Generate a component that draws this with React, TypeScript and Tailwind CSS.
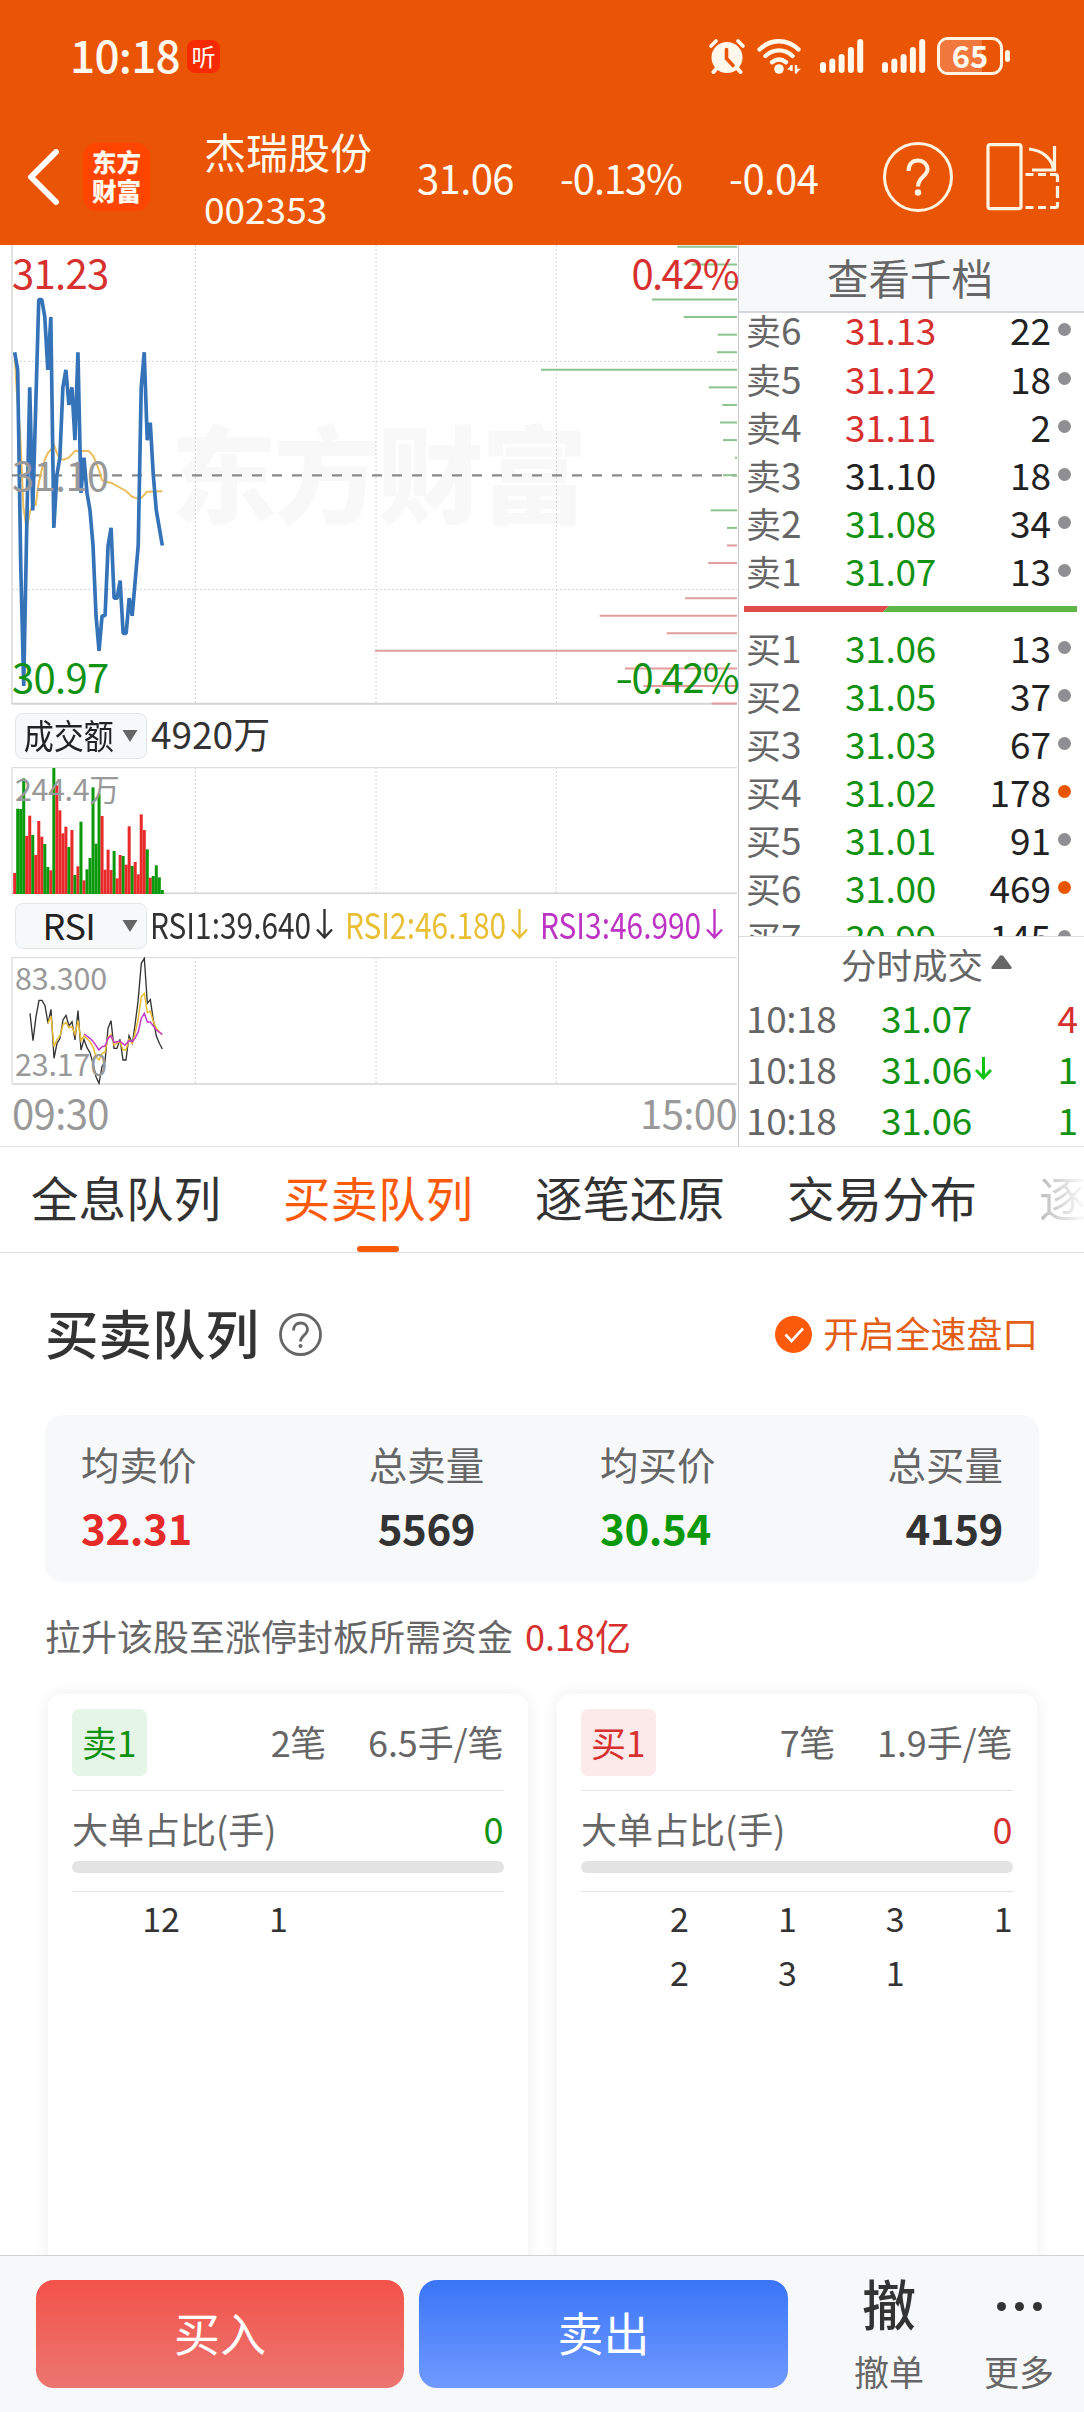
import type { ReactNode } from 'react';

const TICK = 52.7;
const TOP = 20.5;
const START_X = 44;
const MINUTE = 9.04;
const CHART_RIGHT = 2211;
const GRID_X = [586, 1128, 1669];

// ticks below the day's upper bound (31.23), one value per minute
const PRICES = [
  6, 7, 18, 25, 16, 8, 15, 9, 3, 3, 4, 7, 4, 16, 13, 12, 8, 7, 9, 8, 11, 6, 14, 12, 14, 15, 17, 21, 23, 21, 21, 17, 16,
  20, 20, 19, 22, 22, 20, 21, 19, 17, 8, 6, 11, 10, 13, 15, 16, 17,
];

const AVERAGE =
  '44,340 50,450 61,590 70,800 80,868 90,815 98,795 107,795 116,730 125,690 134,660 143,640 152,630 162,615 171,640 180,658 190,659 205,654 225,633 266,633 280,648 297,690 306,720 315,726 333,728 378,753 396,770 410,775 425,773 441,755 487,754';

// [tick, left edge]
const SELL_DEPTH = [
  [0, 2032], [1, 2075], [2, 2182], [3, 1956], [4, 2051], [5, 2153], [6, 2151], [7, 1623], [8, 2126], [9, 2167],
  [10, 2160], [11, 2169], [12, 2205], [13, 2169], [15, 2132], [16, 2181],
];
const BUY_DEPTH = [
  [17, 2181], [18, 2125], [20, 2055], [21, 1799], [22, 2000], [23, 1125], [24, 1875], [25, 1930], [26, 2135],
];

const VOLUME =
  'r519 g326 g327 g235 r408 r347 g405 r465 r363 r410 g432 g501 r511 g204 r256 r331 r400 r380 g441 r390 g525 r499 g365 r541 g508 g474 g262 g431 g280 r348 r509 r449 r510 g453 r535 r465 g468 r494 r379 g498 r486 r523 r343 r390 g448 r533 g528 g496 g532 g570'.split(' ');

const RSI1 =
  '90,940 99,1022 108,950 117,901 126,901 135,917 144,970 153,928 162,1075 171,1030 180,1015 189,960 198,946 207,978 216,965 225,1020 234,932 243,1050 252,1018 261,1043 270,1058 279,1090 288,1130 297,1150 306,1100 315,1085 324,985 333,962 342,1045 351,1045 360,1018 369,1080 378,1080 387,1007 397,1030 405,975 414,905 424,790 433,775 442,910 451,899 460,960 469,1008 478,1030 487,1047';
const RSI2 =
  '144,970 153,948 162,1040 171,1018 180,1008 189,975 198,967 207,983 216,980 225,1003 234,962 243,1022 252,1008 270,1025 280,1043 288,1070 297,1080 306,1060 315,1057 324,1012 333,1003 342,1035 360,1025 369,1050 378,1050 387,1018 397,1030 405,1000 414,960 424,890 433,880 442,938 451,933 460,965 469,985 487,1005';
const RSI3 =
  '252,1002 270,1015 280,1025 297,1050 306,1040 315,1038 324,1015 333,1008 342,1027 360,1024 375,1036 387,1022 397,1025 405,1015 415,995 424,955 433,940 442,966 451,966 460,978 469,990 487,1003';

interface Level {
  label: string;
  price: string;
  qty: number;
  tone: string;
  hot?: boolean;
}

const RED = 'text-[#d6302f]';
const GREEN = 'text-[#129212]';

const SELLS: Level[] = [
  { label: '卖6', price: '31.13', qty: 22, tone: RED },
  { label: '卖5', price: '31.12', qty: 18, tone: RED },
  { label: '卖4', price: '31.11', qty: 2, tone: RED },
  { label: '卖3', price: '31.10', qty: 18, tone: 'text-[#222]' },
  { label: '卖2', price: '31.08', qty: 34, tone: GREEN },
  { label: '卖1', price: '31.07', qty: 13, tone: GREEN },
];

const BUYS: Level[] = [
  { label: '买1', price: '31.06', qty: 13, tone: GREEN },
  { label: '买2', price: '31.05', qty: 37, tone: GREEN },
  { label: '买3', price: '31.03', qty: 67, tone: GREEN },
  { label: '买4', price: '31.02', qty: 178, tone: GREEN, hot: true },
  { label: '买5', price: '31.01', qty: 91, tone: GREEN },
  { label: '买6', price: '31.00', qty: 469, tone: GREEN, hot: true },
  { label: '买7', price: '30.99', qty: 145, tone: GREEN },
];

const TRADES = [
  { time: '10:18', price: '31.07', qty: 4, tone: RED, down: false },
  { time: '10:18', price: '31.06', qty: 1, tone: GREEN, down: true },
  { time: '10:18', price: '31.06', qty: 1, tone: GREEN, down: false },
];

const TABS = ['全息队列', '买卖队列', '逐笔还原', '交易分布'];

function Signal() {
  return (
    <svg width="44" height="34" viewBox="0 0 44 34" fill="#fff8ec">
      <rect x="0" y="23" width="6" height="11" rx="3" />
      <rect x="9.3" y="19.5" width="6" height="14.5" rx="3" />
      <rect x="18.6" y="15" width="6" height="19" rx="3" />
      <rect x="27.9" y="8" width="6" height="26" rx="3" />
      <rect x="37.2" y="0" width="6" height="34" rx="3" />
    </svg>
  );
}

function StatusBar() {
  return (
    <div className="flex h-[112px] items-center pr-[74px] pl-[70px]">
      <span className="pb-[4px] text-[44px] leading-none font-medium tracking-[-0.7px]">10:18</span>
      <span className="ml-[7px] flex h-[33px] w-[33px] items-center justify-center rounded-lg bg-[#f62b04] pb-[2px] text-[24px] leading-[31px]">
        听
      </span>
      <div className="ml-auto flex items-center">
        <svg width="36" height="35" viewBox="0 0 36 35" fill="none" stroke="#fff8ec" strokeLinecap="round">
          <circle cx="18" cy="18.5" r="15.5" fill="#fff8ec" stroke="none" />
          <path d="M2 7l5-5M34 7l-5-5" strokeWidth="3.6" />
          <path d="M8 29l-3.5 4M28 29l3.5 4" strokeWidth="4" />
          <path d="M17.5 10.5v9l6.5 7" stroke="#ea5504" strokeWidth="3.6" />
        </svg>
        <svg className="ml-3" width="44" height="36" viewBox="0 0 44 36" fill="none" stroke="#fff8ec" strokeWidth="4.4" strokeLinecap="round">
          <path d="M2.5 11.5c11-11 28-11 39 0M8.5 18c8-7.500 19-7.500 27 0M15 24.200c4.500-3.600 9.500-3.600 14 0" />
          <circle cx="22" cy="31" r="4.8" fill="#fff8ec" stroke="none" />
          <path d="M34.5 27v6M39 27v8.500" strokeWidth="2.4" strokeLinecap="butt" />
          <path d="M34.5 35.500v-8.500l-4.500 4.800h4.500zM39 27v8.500l5-4.800h-5z" fill="#fff8ec" stroke="none" />
        </svg>
        <span className="ml-[19px]"><Signal /></span>
        <span className="ml-[18px]"><Signal /></span>
        <div className="relative ml-[11px] flex h-[38px] w-[66px] items-center justify-center rounded-[11px] border-[3px] border-[#fff3e2]">
          <div className="absolute inset-y-0 left-0 w-[42px] rounded-l-[8px] bg-[#f1783c]" />
          <span className="relative pb-[3px] text-[31px] leading-[32px] font-bold">65</span>
        </div>
        <div className="ml-[2px] h-3 w-[5px] rounded-sm bg-[#fff3e2]" />
      </div>
    </div>
  );
}

function Header() {
  return (
    <header className="h-[245px] bg-[#e95504] text-[#fffaf0]">
      <StatusBar />
      <div className="flex h-[130px] items-center pl-[27px]">
        <svg width="33" height="56" viewBox="0 0 33 56" fill="none" stroke="#fff" strokeWidth="6" strokeLinecap="round" strokeLinejoin="round">
          <path d="M29 3L4 28l25 25" />
        </svg>
        <div className="ml-[23px] flex h-[68px] w-[67px] flex-col items-center justify-center rounded-[14px] bg-[#ff4500] pb-[3px] text-[24.500px] leading-[29px] font-black">
          <span>东方</span>
          <span>财富</span>
        </div>
        <div className="ml-[54px] flex w-[213px] flex-col pt-[3px]">
          <span className="text-[42px] leading-[58px]">杰瑞股份</span>
          <span className="text-[37px] leading-[56px]">002353</span>
        </div>
        <span className="w-[143px] text-[40px] leading-none tracking-[-0.6px]">31.06</span>
        <span className="w-[169px] text-[40px] leading-none tracking-[-1.1px]">-0.13%</span>
        <span className="w-[154px] text-[40px] leading-none tracking-[-0.4px]">-0.04</span>
        <span className="flex h-[70px] w-[70px] items-center justify-center rounded-full border-[3px] border-[#fff3e2]">
          <svg width="24" height="38" viewBox="0 0 24 38" fill="none" stroke="#fff3e2" strokeWidth="4">
            <path d="M2.5 13C2.5 6 6.5 2.5 12 2.5S21.5 6.5 21.5 11.5C21.5 18 12 19 12 28.5" />
            <circle cx="12" cy="34.5" r="3.2" fill="#fff3e2" stroke="none" />
          </svg>
        </span>
        <svg className="ml-[33px]" width="74" height="68" viewBox="0 0 74 68" fill="none" stroke="#fff3e2" strokeWidth="3.2">
          <rect x="2" y="1.6" width="33" height="64" rx="2" />
          <path d="M43 6c13 1.500 23 9 24.500 20.500M68.500 3v24H46" />
          <path d="M39.500 31.500h8M52 31.500h8M64 31.500h5.500q2 0 2 2V39M71.500 43v12M71.500 59v3.500q0 2-2 2H64M39.500 64.500h8M52 64.500h8" />
        </svg>
      </div>
    </header>
  );
}

function GridLines({ y1, y2 }: { y1: number; y2: number }) {
  return (
    <g stroke="#d2d2d2" strokeWidth="3" strokeDasharray="6 6">
      {GRID_X.map((x) => (
        <line key={x} x1={x} x2={x} y1={y1} y2={y2} />
      ))}
    </g>
  );
}

function PriceChart() {
  const y = (tick: number) => TOP + tick * TICK;
  const line = PRICES.map((p, i) => `${START_X + i * MINUTE},${y(p)}`).join(' ');
  return (
    <div className="relative h-[460px] text-[40px] leading-[40px]">
      <svg className="block" width="738" height="460" viewBox="0 15 2214 1380" fill="none">
        <text x="512" y="826" fontSize="318" fontWeight="900" fill="#f8f8f8" textLength="1250">
          东方财富
        </text>
        <GridLines y1={15} y2={1391} />
        <path d="M36 364H2211M36 1048H2211" stroke="#d2d2d2" strokeWidth="3" strokeDasharray="6 6" />
        <path d="M36 15V1391" stroke="#ddd" strokeWidth="5" />
        <path d="M36 1391H2211" stroke="#d4d4d4" strokeWidth="6" />
        <path d="M36 706H2211" stroke="#8a8a8a" strokeWidth="7" strokeDasharray="30 30" />
        <g stroke="#8cc48c" strokeWidth="6">
          {SELL_DEPTH.map(([t, x]) => (
            <line key={t} x1={x} x2={CHART_RIGHT} y1={y(t)} y2={y(t)} />
          ))}
        </g>
        <g stroke="#e19c9c" strokeWidth="6">
          {BUY_DEPTH.map(([t, x]) => (
            <line key={t} x1={x} x2={CHART_RIGHT} y1={y(t)} y2={y(t)} />
          ))}
        </g>
        <polyline points={AVERAGE} stroke="#ebbd5c" strokeWidth="6" />
        <polyline points={line} stroke="#3573b9" strokeWidth="11" strokeLinejoin="bevel" />
      </svg>
      <span className={`absolute top-[7px] left-[12px] tracking-[-0.7px] ${RED}`}>31.23</span>
      <span className={`absolute top-[7px] right-0 tracking-[-1.6px] ${RED}`}>0.42%</span>
      <span className="absolute top-[209px] left-[12px] tracking-[-0.7px] text-[#999]">31.10</span>
      <span className={`absolute top-[411px] left-[12px] tracking-[-0.7px] ${GREEN}`}>30.97</span>
      <span className={`absolute top-[411px] right-0 flex tracking-[-1.6px] ${GREEN}`}>
        <span className="origin-right scale-x-[1.3]">-</span>0.42%
      </span>
    </div>
  );
}

function Picker({ children }: { children: ReactNode }) {
  return (
    <div className="ml-[15px] flex h-[46px] w-[132px] items-center rounded-lg border border-[#e3e6ea] bg-[#f7f8fa] pr-[8px] text-[#222]">
      <div className="flex flex-1 justify-center pb-[4px]">{children}</div>
      <svg width="16" height="12" viewBox="0 0 16 12" fill="#666">
        <path d="M0.5 0h15L8 12z" />
      </svg>
    </div>
  );
}

function VolumeChart() {
  return (
    <div className="relative h-[127px]">
      <svg className="block" width="738" height="127" viewBox="0 201 2214 381" fill="none">
        <GridLines y1={201} y2={581} />
        <path d="M36 202.5H2211M36 201V581" stroke="#ddd" strokeWidth="4" />
        <path d="M36 580H2211" stroke="#d4d4d4" strokeWidth="5" />
        {VOLUME.map((v, i) => {
          const top = Number(v.slice(1));
          return (
            <rect key={i} x={39.5 + i * MINUTE} y={top} width="9.04" height={582 - top} fill={v[0] === 'r' ? '#e92a2a' : '#0b990b'} />
          );
        })}
      </svg>
      <span className="absolute top-[6px] left-[15px] text-[30.5px] leading-[30px] tracking-[-0.4px] text-[#999]">244.4万</span>
    </div>
  );
}

function RsiChart() {
  return (
    <div className="relative h-[128px] text-[30.5px] leading-[30px] tracking-[-0.2px] text-[#999]">
      <svg className="block" width="738" height="128" viewBox="0 771 2214 384" fill="none">
        <GridLines y1={771} y2={1152} />
        <path d="M36 772.5H2211M36 771V1152" stroke="#ddd" strokeWidth="4" />
        <path d="M36 1152H2211" stroke="#dedede" strokeWidth="6" />
        <polyline points={RSI1} stroke="#333" strokeWidth="4" />
        <polyline points={RSI2} stroke="#e9bd35" strokeWidth="4.5" />
        <polyline points={RSI3} stroke="#c23bc6" strokeWidth="4.5" />
      </svg>
      <span className="absolute top-[5px] left-[15px]">83.300</span>
      <span className="absolute top-[91px] left-[15px]">23.170</span>
    </div>
  );
}

function RsiValue({ label, tone, width }: { label: string; tone: string; width: string }) {
  return (
    <div className={`flex items-center ${width} ${tone}`}>
      <span className="w-[161px] pb-[6px] text-[36px] leading-none whitespace-nowrap">
        <span className="inline-block origin-left scale-x-[0.83]">{label}</span>
      </span>
      <svg className="ml-[5px] mb-1" width="17" height="32" viewBox="0 0 17 32" fill="none" stroke="currentColor" strokeWidth="2.4">
        <path d="M8.5 1v28.5M1 21.5l7.5 8 7.5-8" />
      </svg>
    </div>
  );
}

function ChartColumn() {
  return (
    <section className="w-[738px]">
      <PriceChart />
      <div className="flex h-[62px] items-center">
        <Picker>
          <span className="scale-x-[0.87] text-[34.5px] leading-none whitespace-nowrap">成交额</span>
        </Picker>
        <span className="ml-[4px] pb-[6px] text-[37px] leading-none text-[#333]">4920万</span>
      </div>
      <VolumeChart />
      <div className="flex h-[63px] items-center">
        <Picker>
          <span className="text-[36px] leading-none tracking-[-0.5px]">RSI</span>
        </Picker>
        <div className="flex pl-[3px]">
          <RsiValue label="RSI1:39.640" tone="text-[#333]" width="w-[195px]" />
          <RsiValue label="RSI2:46.180" tone="text-[#e8bf35]" width="w-[195px]" />
          <RsiValue label="RSI3:46.990" tone="text-[#bd33c3]" width="w-[190px]" />
        </div>
      </div>
      <RsiChart />
      <div className="flex h-[61px] items-center justify-between pr-[1px] pb-[7px] pl-[12px] text-[40px] leading-none tracking-[-0.6px] text-[#999]">
        <span>09:30</span>
        <span>15:00</span>
      </div>
    </section>
  );
}

function LevelRow({ level }: { level: Level }) {
  return (
    <div className="flex h-[48.2px] shrink-0 items-center text-[37px] leading-none">
      <span className="w-[99px] text-[35px] text-[#666]">
        {level.label[0]}
        <span className="text-[37px]">{level.label[1]}</span>
      </span>
      <span className={`tracking-[-0.3px] ${level.tone}`}>{level.price}</span>
      <span className="ml-auto text-[#222]">{level.qty}</span>
      <span className={`mr-[13px] ml-[7px] h-[13px] w-[13px] rounded-full ${level.hot ? 'bg-[#ea5504]' : 'bg-[#8e8e93]'}`} />
    </div>
  );
}

function OrderBook() {
  return (
    <section className="flex flex-1 flex-col border-l border-[#c9c9c9]">
      <div className="flex h-[68px] items-center justify-center border-b-2 border-[#d4d8dd] bg-[#f7f8fa] pr-[3px] text-[41.5px] leading-none text-[#666]">
        查看千档
      </div>
      <div className="h-[625px] overflow-hidden pl-[7px]">
        <div className="-mt-[7px]">
          {SELLS.map((l) => (
            <LevelRow key={l.label} level={l} />
          ))}
        </div>
        <svg className="mt-[11px] -ml-[2px]" width="333" height="6" viewBox="0 0 333 6">
          <path d="M0 0h145l-6 6H0z" fill="#e04b4b" />
          <path d="M145 0h188v6H139z" fill="#5fb648" />
        </svg>
        <div className="mt-[11px]">
          {BUYS.map((l) => (
            <LevelRow key={l.label} level={l} />
          ))}
        </div>
      </div>
      <div className="flex h-[57px] items-center border-t border-[#ddd] pb-[2px] pl-[102px] text-[35.5px] leading-none text-[#666]">
        分时成交
        <svg className="mb-[4px] ml-[8px]" width="21" height="14" viewBox="0 0 21 14" fill="#666">
          <path d="M8.5 1.2q2-2 4 0L20.5 12q.5 2-1 2h-18q-1.500 0-1-2z" />
        </svg>
      </div>
      {TRADES.map((t, i) => (
        <div key={i} className="flex h-[51.3px] items-center pr-[6px] pb-[1px] pl-[7px] text-[37px] leading-none">
          <span className="w-[135px] tracking-[-0.4px] text-[#666]">{t.time}</span>
          <span className={`tracking-[-0.3px] ${GREEN}`}>{t.price}</span>
          {t.down && (
            <svg className="ml-[3px]" width="17" height="23" viewBox="0 0 17 23" fill="none" stroke="#0fc40f" strokeWidth="3">
              <path d="M8.5 0v21M1 13l7.5 7.8L16 13" />
            </svg>
          )}
          <span className={`ml-auto ${t.tone}`}>{t.qty}</span>
        </div>
      ))}
    </section>
  );
}

function Tabs() {
  return (
    <nav className="flex h-[107px] items-center gap-[62px] overflow-hidden border-y border-[#e0e0e0] pl-[31px] text-[47.5px] leading-none whitespace-nowrap text-[#333]">
      {TABS.map((t) =>
        t === '买卖队列' ? (
          <span key={t} className="relative flex h-full items-center pb-[6px] text-[#fa5a0a]">
            {t}
            <i className="absolute bottom-0 left-[74px] h-[6px] w-[42px] rounded-full bg-[#fa5a0a]" />
          </span>
        ) : (
          <span key={t} className="pb-[6px]">{t}</span>
        ),
      )}
      <span className="bg-linear-to-r from-[#bbb] to-[#fff] bg-clip-text pb-[6px] text-transparent">逐</span>
    </nav>
  );
}

function Stat({ label, value, tone, align }: { label: string; value: string; tone: string; align: string }) {
  return (
    <div className={`flex flex-col whitespace-nowrap ${align}`}>
      <span className="text-[38.5px] leading-[64px] text-[#666]">{label}</span>
      <span className={`text-[42px] leading-[64px] font-bold tracking-[-0.4px] ${tone}`}>{value}</span>
    </div>
  );
}

interface QueueProps {
  name: string;
  badge: string;
  tone: string;
  orders: string;
  avg: string;
  queue: number[];
}

function QueueCard({ name, badge, tone, orders, avg, queue }: QueueProps) {
  return (
    <div className="h-[700px] w-[479.5px] rounded-[14px] bg-white px-[24px] pt-[15px] shadow-[0_0_18px_rgba(0,0,0,0.07)]">
      <div className="flex h-[82px] items-start border-b border-[#e3e3e3] text-[36px] leading-[65px] text-[#666]">
        <span className={`h-[67px] w-[75px] rounded-[7px] pl-[10px] text-[35px] ${badge} ${tone}`}>{name}</span>
        <span className="ml-auto tracking-[-0.3px]">{orders}</span>
        <span className="ml-[42px] tracking-[-0.1px]">{avg}</span>
      </div>
      <div className="flex h-[70px] items-center justify-between pt-[3px] text-[36px] leading-none text-[#666]">
        <span>大单占比(手)</span>
        <span className={tone}>0</span>
      </div>
      <div className="h-3 rounded-full bg-[#e3e3e3]" />
      <div className="mt-[18px] grid grid-cols-4 border-t border-[#e3e3e3] text-right text-[34px] leading-[54px] text-[#333]">
        {queue.map((q, i) => (
          <span key={i} className="-mt-[1px] mb-[1px]">{q}</span>
        ))}
      </div>
    </div>
  );
}

function QueuePanel() {
  return (
    <main className="h-[1002px] overflow-hidden">
      <div className="flex h-[162px] items-center pr-[46px] pl-[45px]">
        <h2 className="pb-[5px] text-[53.5px] leading-none font-medium text-[#333]">买卖队列</h2>
        <svg className="ml-[20px]" width="43" height="43" viewBox="0 0 43 43" fill="none" stroke="#666" strokeWidth="2.8">
          <circle cx="21.5" cy="21.5" r="20" />
          <path d="M14.5 17.5c0-5 3-7.5 7-7.5s7 2.700 7 6.500c0 5.500-7 6-7 12" />
          <circle cx="21.5" cy="33" r="2" fill="#666" stroke="none" />
        </svg>
        <svg className="mr-[11px] ml-auto" width="37" height="37" viewBox="0 0 37 37" fill="none">
          <circle cx="18.5" cy="18.5" r="18.5" fill="#fa5a0a" />
          <path d="M10.5 18.5l6 6.5L28 12.5" stroke="#fff" strokeWidth="2.6" />
        </svg>
        <span className="pb-[2px] text-[35.8px] leading-none text-[#e35f17]">开启全速盘口</span>
      </div>
      <div className="mx-[45px] grid h-[167px] grid-cols-[288px_115px_1fr_168px] rounded-[18px] bg-[#f7f8fa] px-[36px] pt-[16px]">
        <Stat label="均卖价" value="32.31" tone="text-[#e52a2a]" align="items-start" />
        <Stat label="总卖量" value="5569" tone="text-[#333]" align="items-center" />
        <Stat label="均买价" value="30.54" tone="text-[#0b990b]" align="items-start pl-[116px]" />
        <Stat label="总买量" value="4159" tone="text-[#333]" align="items-end" />
      </div>
      <p className="mt-[26px] ml-[45px] text-[36px] leading-[54px] text-[#666]">
        拉升该股至涨停封板所需资金<span className={`ml-[12px] ${RED}`}>0.18亿</span>
      </p>
      <div className="mt-[32px] ml-[48px] flex gap-[29.5px]">
        <QueueCard name="卖1" badge="bg-[#e5f5e6]" tone={GREEN} orders="2笔" avg="6.5手/笔" queue={[12, 1]} />
        <QueueCard name="买1" badge="bg-[#fce9e9]" tone={RED} orders="7笔" avg="1.9手/笔" queue={[2, 1, 3, 1, 2, 3, 1]} />
      </div>
    </main>
  );
}

function TradeBar() {
  return (
    <footer className="relative flex h-[157px] border-t border-[#d2d3d5] bg-[#f7f8fa] pt-[24px] pl-[36px]">
      <button className="h-[108px] w-[368px] rounded-[18px] bg-linear-to-b from-[#f3524a] to-[#eb756f] pb-[6px] text-[46px] leading-none text-white">
        买入
      </button>
      <button className="ml-[15px] h-[108px] w-[369px] rounded-[18px] bg-linear-to-b from-[#3a75f7] to-[#6f99ff] pb-[6px] text-[46px] leading-none text-white">
        卖出
      </button>
      <div className="ml-[56px] flex w-[90px] flex-col items-center">
        <span className="-mt-[4px] text-[54px] leading-[54px] font-medium text-[#333]">撤</span>
        <span className="mt-[17px] text-[35px] leading-[48px] text-[#666]">撤单</span>
      </div>
      <div className="ml-[40px] flex w-[90px] flex-col items-center">
        <span className="flex h-[53px] items-center gap-[9px]">
          <i className="h-[9px] w-[9px] rounded-full bg-[#333]" />
          <i className="h-[9px] w-[9px] rounded-full bg-[#333]" />
          <i className="h-[9px] w-[9px] rounded-full bg-[#333]" />
        </span>
        <span className="mt-[14px] text-[35px] leading-[48px] text-[#666]">更多</span>
      </div>
    </footer>
  );
}

export default function App() {
  return (
    <div className="h-[2412px] w-[1084px] overflow-hidden bg-white font-['Noto_Sans_CJK_SC','Noto_Sans',sans-serif]">
      <Header />
      <div className="flex h-[901px]">
        <ChartColumn />
        <OrderBook />
      </div>
      <Tabs />
      <QueuePanel />
      <TradeBar />
    </div>
  );
}
